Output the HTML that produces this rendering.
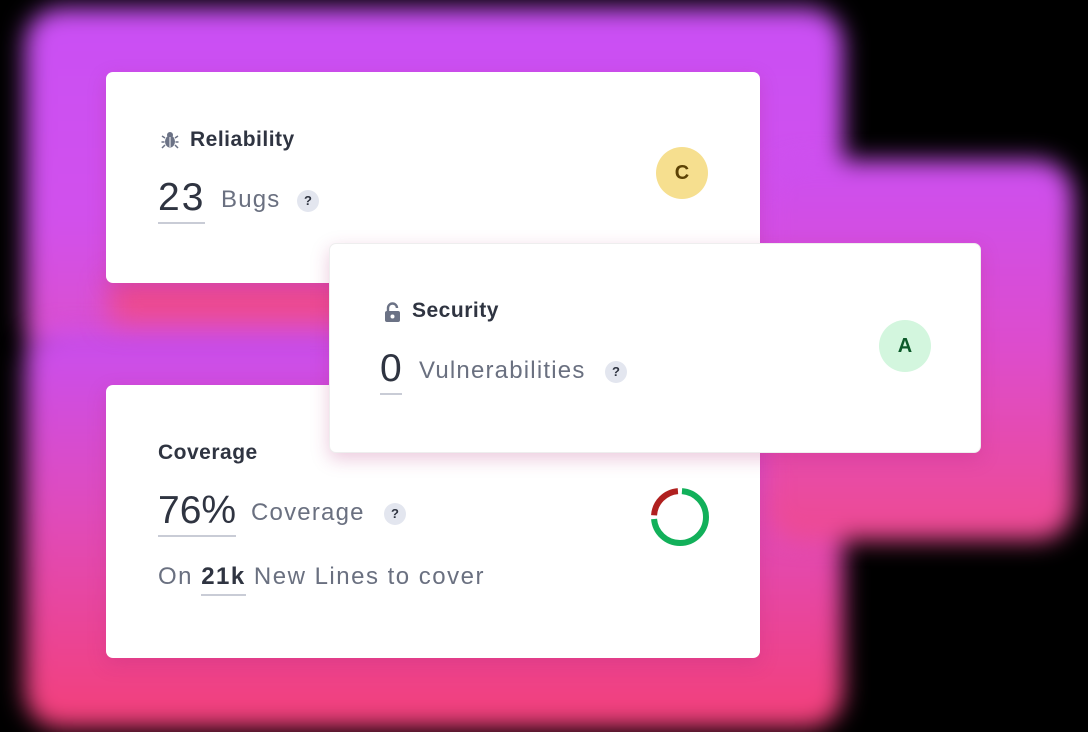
<!DOCTYPE html>
<html><head><meta charset="utf-8"><style>
*{margin:0;padding:0;box-sizing:border-box}
body{width:1088px;height:732px;background:#000;position:relative;overflow:hidden;font-family:"Liberation Sans",sans-serif}
.g{position:absolute;filter:blur(12px)}
.card{position:absolute;background:#fff;border-radius:7px;box-shadow:0 6px 18px rgba(180,40,120,.25)}
.t{position:absolute;font-weight:bold;font-size:21px;color:#2f3441;letter-spacing:.5px}
.num{position:absolute;font-size:39px;color:#2f3441;border-bottom:2px solid #c9ccd6;line-height:44px;padding-bottom:2px}
.lab{position:absolute;font-size:24px;color:#6a7080;letter-spacing:1.2px}
.q{position:absolute;width:22px;height:22px;border-radius:50%;background:#e3e6ef;color:#2f3441;font-size:13px;font-weight:bold;text-align:center;line-height:22px}
.grade{position:absolute;width:52px;height:52px;border-radius:50%;text-align:center;line-height:52px;font-size:20px;font-weight:bold}
</style></head><body>
<div class="g" style="left:25px;top:8px;width:818px;height:350px;background:linear-gradient(#c94ff4,#d150ec 60%,#dc4fc8);border-radius:36px"></div>
<div class="g" style="left:25px;top:330px;width:818px;height:398px;background:linear-gradient(#c84ef0,#df4bbc 45%,#f33f78);border-radius:36px"></div>
<div class="g" style="left:765px;top:160px;width:308px;height:380px;background:linear-gradient(#cc4ff0,#dd4ccc 50%,#ee4a90);border-radius:36px"></div>
<div class="g" style="left:110px;top:282px;width:640px;height:40px;background:#ef4a8a;filter:blur(14px)"></div>

<div class="card" style="left:106px;top:72px;width:654px;height:211px">
  <svg style="position:absolute;left:54px;top:58px" width="20" height="20" viewBox="0 0 20 20"><g fill="#6b7285"><ellipse cx="10" cy="11.5" rx="5" ry="6"/><circle cx="10" cy="5" r="3"/></g><g stroke="#6b7285" stroke-width="1.5"><path d="M5 8L2 6M15 8l3-2M4.5 12H1.5M15.5 12h3M5 15l-3 3M15 15l3 3"/></g><path d="M10 7v10" stroke="#fff" stroke-width="1"/></svg>
  <div class="t" style="left:84px;top:56px">Reliability</div>
  <div class="num" style="left:52px;top:104px;letter-spacing:2px">23</div>
  <div class="lab" style="left:115px;top:114px">Bugs</div>
  <div class="q" style="left:191px;top:118px">?</div>
  <div class="grade" style="left:550px;top:75px;background:#f6df8f;color:#5c4204">C</div>
</div>

<div class="card" style="left:106px;top:385px;width:654px;height:273px">
  <div class="t" style="left:52px;top:56px">Coverage</div>
  <div class="num" style="left:52px;top:104px">76%</div>
  <div class="lab" style="left:145px;top:114px">Coverage</div>
  <div class="q" style="left:278px;top:118px">?</div>
  <div class="lab" style="left:52px;top:178px;letter-spacing:1.5px">On <b style="color:#2f3441;border-bottom:2px solid #c9ccd6;padding-bottom:4px">21k</b> New Lines to cover</div>
  <svg style="position:absolute;left:544px;top:102px" width="60" height="60" viewBox="0 0 60 60">
    <circle cx="30" cy="30" r="26" fill="none" stroke="#12b05a" stroke-width="6" stroke-dasharray="118.3 163.4" stroke-dashoffset="-2" transform="rotate(-90 30 30)"/>
    <circle cx="30" cy="30" r="26" fill="none" stroke="#b0201f" stroke-width="6" stroke-dasharray="37 163.4" stroke-dashoffset="-124" transform="rotate(-90 30 30)"/>
  </svg>
</div>

<div class="card" style="left:329px;top:243px;width:652px;height:210px;border:1px solid #eee">
  <svg style="position:absolute;left:54px;top:58px" width="17" height="21" viewBox="0 0 17 21"><path d="M4 9V6a4.5 4.5 0 0 1 9 0" fill="none" stroke="#6b7285" stroke-width="2.4"/><rect x="1" y="9" width="15" height="11" rx="2" fill="#6b7285"/><circle cx="8.5" cy="14.5" r="2" fill="#fff"/></svg>
  <div class="t" style="left:82px;top:55px">Security</div>
  <div class="num" style="left:50px;top:103px">0</div>
  <div class="lab" style="left:89px;top:113px">Vulnerabilities</div>
  <div class="q" style="left:275px;top:117px">?</div>
  <div class="grade" style="left:549px;top:76px;background:#d3f6de;color:#0d5a2a">A</div>
</div>
</body></html>
